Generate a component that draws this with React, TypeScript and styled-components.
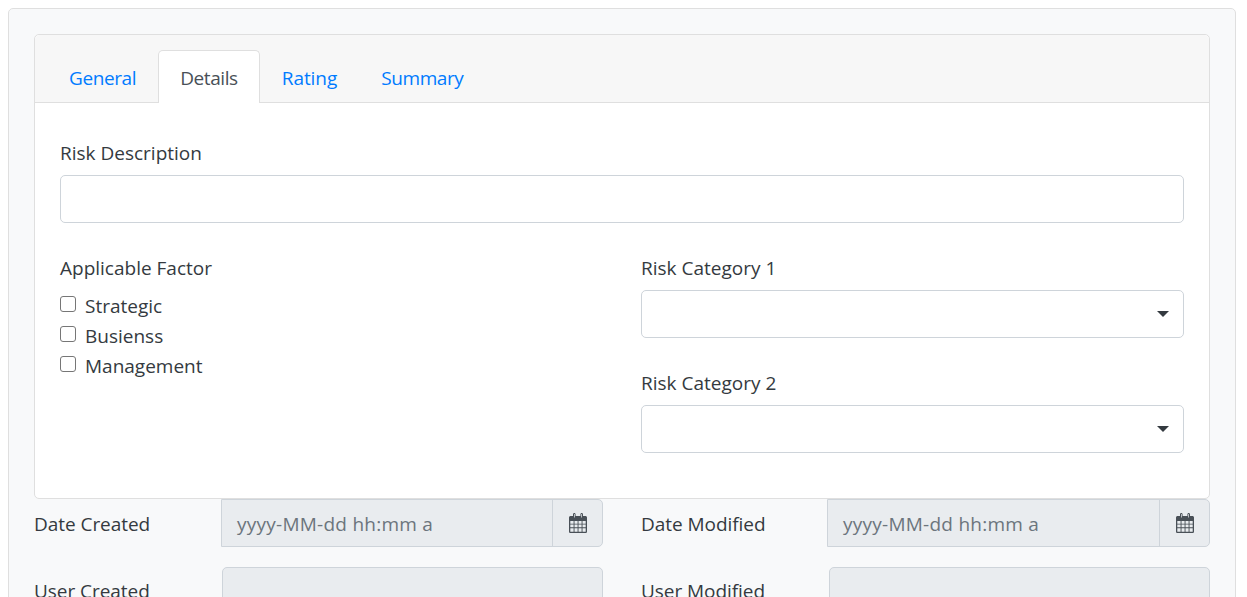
import React from 'react';
import styled, { createGlobalStyle } from 'styled-components';

const Global = createGlobalStyle`
  html, body { height: 597px; overflow: hidden; }
  body { margin: 8px; background: #fff; font-family: "Open Sans", "Noto Sans", "Liberation Sans", sans-serif; color: #343a40; }
  * { box-sizing: border-box; }
`;

const Outer = styled.div`
  width: 1228px;
  height: 700px;
  padding: 25px;
  background: #f8f9fa;
  border: 1px solid #dfdfdf;
  border-radius: 5px;
`;
const Card = styled.div`
  height: 465px;
  background: #fff;
  border: 1px solid #dfdfdf;
  border-radius: 5px;
`;
const TabHeader = styled.div`
  display: flex;
  height: 68px;
  padding: 15px 12px 0;
  background: #f7f7f7;
  border-bottom: 1px solid #dfdfdf;
  border-radius: 5px 5px 0 0;
`;
const Tab = styled.div<{ $active?: boolean; $spacing?: number }>`
  height: 53px;
  padding: 0 21px;
  border: 1px solid ${p => (p.$active ? '#dfdfdf' : 'transparent')};
  border-bottom: 0;
  border-radius: 5px 5px 0 0;
  background: ${p => (p.$active ? '#fff' : 'transparent')};
  color: ${p => (p.$active ? '#495057' : '#007bff')};
  font-size: 19px;
  line-height: 55px;
  letter-spacing: ${p => p.$spacing ?? -0.4}px;
`;
const CardBody = styled.div`
  padding: 35px 25px 0;
`;
const Label = styled.div`
  font-size: 19px;
  line-height: 30px;
  height: 30px;
  color: #343a40;
`;
const TextBox = styled.div`
  height: 48px;
  margin-top: 7px;
  background: #fff;
  border: 1px solid #ced4da;
  border-radius: 5px;
`;
const Columns = styled.div`
  display: grid;
  grid-template-columns: 1fr 543px;
  column-gap: 38px;
  margin-top: 30px;
`;
const CheckList = styled.div`
  display: flex;
  flex-direction: column;
  margin-top: 8px;
`;
const CheckRow = styled.label`
  display: flex;
  align-items: center;
  gap: 9px;
  height: 30px;
  font-size: 19px;
  color: #343a40;
`;
const Box = styled.span`
  width: 16px;
  height: 16px;
  margin-top: -4px;
  background: #fff;
  border: 1px solid #767676;
  border-radius: 3px;
`;
const Select = styled(TextBox)`
  display: flex;
  align-items: center;
  justify-content: flex-end;
  padding-right: 14px;
  margin-top: 7px;
  margin-bottom: 30px;
`;
const Caret = styled.span`
  width: 0;
  height: 0;
  border-left: 6px solid transparent;
  border-right: 6px solid transparent;
  border-top: 6px solid #343a40;
`;
const MetaGrid = styled.div`
  display: grid;
  grid-template-columns: 569px 569px;
  column-gap: 38px;
  row-gap: 20px;
`;
const MetaRow = styled.div<{ $label: number }>`
  display: grid;
  grid-template-columns: ${p => p.$label}px 1fr;
  align-items: center;
`;
const MetaLabel = styled.div<{ $top?: number }>`
  padding-top: ${p => p.$top ?? 0}px;
  font-size: 19px;
  letter-spacing: -0.05px;
  color: #343a40;
`;
const DateGroup = styled.div`
  display: flex;
  height: 48px;
  background: #e9ecef;
  border: 1px solid #ced4da;
  border-radius: 0 5px 5px 0;
`;
const DateText = styled.div`
  flex: 1;
  padding-left: 15px;
  font-size: 19px;
  line-height: 48px;
  letter-spacing: 0.25px;
  color: #6c757d;
`;
const Addon = styled.div`
  width: 50px;
  display: flex;
  align-items: center;
  justify-content: center;
  border-left: 1px solid #ced4da;
`;
const Disabled = styled.div`
  height: 48px;
  background: #e9ecef;
  border: 1px solid #ced4da;
  border-radius: 5px;
`;

const CalendarIcon = () => (
  <svg width="18" height="20" viewBox="0 0 18 20" aria-hidden="true">
    <path
      fill="#495057"
      fillRule="evenodd"
      d="M4 1.4C4 .6 4.6 0 5.3 0S6.6.6 6.6 1.4V3h4.8V1.4c0-.8.6-1.4 1.3-1.4S14 .6 14 1.4V3h2.4c.9 0 1.6.7 1.6 1.6v13.8c0 .9-.7 1.6-1.6 1.6H1.6C.7 20 0 19.3 0 18.4V4.6C0 3.7.7 3 1.6 3H4V1.4Zm1 0V4.4h.7V1.4c0-.6-.7-.6-.7 0Zm7.3 0V4.4h.7V1.4c0-.6-.7-.6-.7 0ZM1.3 8v2.7h3.3V8H1.3Zm4.2 0v2.7h3.1V8H5.5Zm4 0v2.7h3.1V8H9.5Zm4 0v2.7h3.2V8h-3.2ZM1.3 11.6v2.7h3.3v-2.7H1.3Zm4.2 0v2.7h3.1v-2.7H5.5Zm4 0v2.7h3.1v-2.7H9.5Zm4 0v2.7h3.2v-2.7h-3.2ZM1.3 15.2v3.5h3.3v-3.5H1.3Zm4.2 0v3.5h3.1v-3.5H5.5Zm4 0v3.5h3.1v-3.5H9.5Zm4 0v3.5h3.2v-3.5h-3.2Z"
    />
  </svg>
);

export default function App() {
  return (
    <>
      <Global />
      <Outer>
        <Card>
          <TabHeader>
            <Tab>General</Tab>
            <Tab $active>Details</Tab>
            <Tab $spacing={-0.07}>Rating</Tab>
            <Tab>Summary</Tab>
          </TabHeader>
          <CardBody>
            <Label>Risk Description</Label>
            <TextBox />
            <Columns>
              <div>
                <Label>Applicable Factor</Label>
                <CheckList>
                  <CheckRow><Box />Strategic</CheckRow>
                  <CheckRow><Box />Busienss</CheckRow>
                  <CheckRow><Box />Management</CheckRow>
                </CheckList>
              </div>
              <div>
                <Label>Risk Category 1</Label>
                <Select><Caret /></Select>
                <Label>Risk Category 2</Label>
                <Select><Caret /></Select>
              </div>
            </Columns>
          </CardBody>
        </Card>
        <MetaGrid>
          <MetaRow $label={187}>
            <MetaLabel $top={2}>Date Created</MetaLabel>
            <DateGroup>
              <DateText>yyyy-MM-dd hh:mm a</DateText>
              <Addon><CalendarIcon /></Addon>
            </DateGroup>
          </MetaRow>
          <MetaRow $label={186}>
            <MetaLabel $top={2}>Date Modified</MetaLabel>
            <DateGroup>
              <DateText>yyyy-MM-dd hh:mm a</DateText>
              <Addon><CalendarIcon /></Addon>
            </DateGroup>
          </MetaRow>
          <MetaRow $label={188}>
            <MetaLabel>User Created</MetaLabel>
            <Disabled />
          </MetaRow>
          <MetaRow $label={188}>
            <MetaLabel>User Modified</MetaLabel>
            <Disabled />
          </MetaRow>
        </MetaGrid>
      </Outer>
    </>
  );
}
